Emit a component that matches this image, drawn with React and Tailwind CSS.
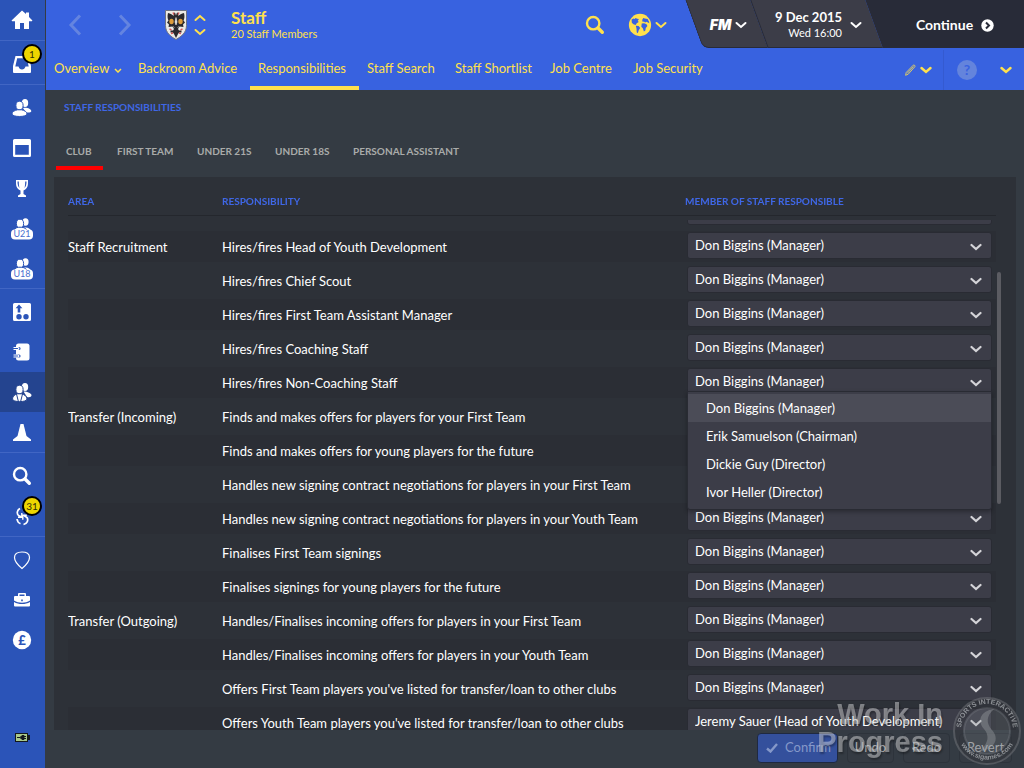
import { useLayoutEffect, useRef } from "react";

const MANAGER = "Don Biggins (Manager)";
const HEAD_OF_YOUTH = "Jeremy Sauer (Head of Youth Development)";
const CANDIDATES = [MANAGER, "Erik Samuelson (Chairman)", "Dickie Guy (Director)", "Ivor Heller (Director)"];

const ROWS = [
  { area: "", text: "", member: MANAGER },
  { area: "Staff Recruitment", text: "Hires/fires Head of Youth Development", member: MANAGER },
  { area: "", text: "Hires/fires Chief Scout", member: MANAGER },
  { area: "", text: "Hires/fires First Team Assistant Manager", member: MANAGER },
  { area: "", text: "Hires/fires Coaching Staff", member: MANAGER },
  { area: "", text: "Hires/fires Non-Coaching Staff", member: MANAGER, open: true },
  { area: "Transfer (Incoming)", text: "Finds and makes offers for players for your First Team", member: MANAGER },
  { area: "", text: "Finds and makes offers for young players for the future", member: MANAGER },
  { area: "", text: "Handles new signing contract negotiations for players in your First Team", member: MANAGER },
  { area: "", text: "Handles new signing contract negotiations for players in your Youth Team", member: MANAGER },
  { area: "", text: "Finalises First Team signings", member: MANAGER },
  { area: "", text: "Finalises signings for young players for the future", member: MANAGER },
  { area: "Transfer (Outgoing)", text: "Handles/Finalises incoming offers for players in your First Team", member: MANAGER },
  { area: "", text: "Handles/Finalises incoming offers for players in your Youth Team", member: MANAGER },
  { area: "", text: "Offers First Team players you've listed for transfer/loan to other clubs", member: MANAGER },
  { area: "", text: "Offers Youth Team players you've listed for transfer/loan to other clubs", member: HEAD_OF_YOUTH },
];

function Chevron({ className = "", width = 2 }) {
  return (
    <svg className={className} width="12" height="8" viewBox="0 0 12 8" fill="none" stroke="currentColor" strokeWidth={width} aria-hidden="true">
      <path d="M1.500 2 6 6l4.500-4" strokeLinecap="round" />
    </svg>
  );
}

function Svg({ children, size = 22, className = "" }) {
  return (
    <svg className={className} width={size} height={size} viewBox="0 0 22 22" fill="currentColor" aria-hidden="true">
      {children}
    </svg>
  );
}

const HomeIcon = () => (
  <Svg>
    <path d="M11 1.500.8 11.300c-.3.4-.1.900.4.900H4V20h5v-6h4v6h5v-7.800h2.800c.5 0 .7-.5.4-.9L18 8V3.500h-3V5z" />
  </Svg>
);

const InboxIcon = () => (
  <Svg>
    <path fillRule="evenodd" d="M4.500 3h13l2.500 10V19a1 1 0 0 1-1 1H3a1 1 0 0 1-1-1v-6zM6.200 5.200 4.300 13.500h3.200c.6 2 1.700 3 3.500 3s2.900-1 3.500-3h3.200l-1.900-8.300z" />
  </Svg>
);

const PeopleIcon = () => (
  <Svg>
    <ellipse cx="14" cy="6" rx="3.200" ry="3.900" />
    <path d="M12 11c4-1 8 1 8.300 3 .1 1.500-2.300 1.700-5.300 1.500z" />
    <g stroke="#2b54b8" strokeWidth="1">
      <ellipse cx="8.500" cy="8.500" rx="3.600" ry="4.300" />
      <path d="M1 17c0-2.500 2.800-3.500 5.500-4.200h4c2.700.7 5.500 1.700 5.500 4.200 0 3.300-15 3.300-15 0z" />
    </g>
  </Svg>
);

const CalendarIcon = () => (
  <Svg>
    <path fillRule="evenodd" d="M3.500 2h15A1.500 1.500 0 0 1 20 3.500v15a1.500 1.500 0 0 1-1.500 1.500h-15A1.500 1.500 0 0 1 2 18.500v-15A1.500 1.500 0 0 1 3.500 2zm.7 6v9.800h13.600V8z" />
  </Svg>
);

const TrophyIcon = () => (
  <Svg>
    <path fillRule="evenodd" d="M5 3h12v3c0 4.500-2 6.500-4.500 7.500v3.500L15 18.500V20H7v-1.500L9.500 17v-3.500C7 12.500 5 10.500 5 6zm1.500 1.500c0 3 .5 5 2 6.500-.5-2-.7-4-.7-6.500zm9 0h-1.300c0 2.500-.2 4.500-.7 6.500 1.500-1.500 2-3.500 2-6.500z" />
  </Svg>
);

function SquadIcon({ label }) {
  return (
    <svg width="24" height="24" viewBox="0 0 24 24" fill="currentColor" aria-hidden="true">
      <ellipse cx="15.500" cy="6" rx="3.100" ry="3.700" />
      <path d="M11 13c5-3 9-1 10 2H11z" />
      <g stroke="#2b54b8" strokeWidth="1">
        <ellipse cx="10" cy="7.500" rx="3.600" ry="4.300" />
        <path d="M4 14.500c1-3 4-3.300 6-3.300s6 .3 7 3.300z" />
      </g>
      <rect x="1" y="13.500" width="22" height="10" rx="4" />
      <text x="12" y="20.500" textAnchor="middle" fontSize="9" fill="#4a6fd0">{label}</text>
    </svg>
  );
}

const TacticsIcon = () => (
  <Svg>
    <path fillRule="evenodd" d="M3.500 2h15A1.500 1.500 0 0 1 20 3.500v15a1.500 1.500 0 0 1-1.500 1.500h-15A1.500 1.500 0 0 1 2 18.500v-15A1.500 1.500 0 0 1 3.500 2zM8 3.500 4.600 7.300h2.100V11.500h2.600V7.300h2.100zM8 13a2.700 2.700 0 1 0 0 5.400A2.700 2.700 0 0 0 8 13zm7 0a2.700 2.700 0 1 0 0 5.400A2.700 2.700 0 0 0 15 13z" />
  </Svg>
);

const NotebookIcon = () => (
  <Svg>
    <rect x="5" y="2.500" width="13.500" height="17" rx="2.500" />
    <path d="M4 7.500h4M4 15h4" fill="none" stroke="#2b54b8" strokeWidth="3.200" strokeLinecap="round" />
    <path d="M2.500 8.500h4.300a1 1 0 0 0 0-2H2.500M2.500 16h4.300a1 1 0 0 0 0-2H2.500" fill="none" stroke="currentColor" strokeWidth="1.200" />
  </Svg>
);

const StaffIcon = () => (
  <Svg>
    <ellipse cx="14" cy="6" rx="3.200" ry="3.900" />
    <path d="M12.500 10.500c4 0 8 2 8 3.800 0 1.700-2 2.200-4.500 1.700z" />
    <g stroke="#24448f" strokeWidth="1">
      <ellipse cx="8.500" cy="8.500" rx="3.600" ry="4.300" />
      <path d="M1.500 18c0-3 2.500-4.500 5-5.200h4c2.500.7 5.500 2.200 5.500 5.200 0 3.500-14.500 3.500-14.500 0z" />
      <path fill="none" d="m5.500 13 2 8M11.500 13l-2 8" />
    </g>
  </Svg>
);

const ConeIcon = () => (
  <Svg>
    <path d="M9.500 3h3l3 12 4.500 3.500V20H2v-1.500L6.500 15z" />
  </Svg>
);

const SearchIcon = () => (
  <Svg>
    <circle cx="9.200" cy="9.200" r="6.200" fill="none" stroke="currentColor" strokeWidth="2.400" />
    <path d="m14 14 4.300 4.300" fill="none" stroke="currentColor" strokeWidth="3.400" strokeLinecap="round" />
  </Svg>
);

const RefreshIcon = () => (
  <Svg>
    <g fill="none" stroke="currentColor" strokeWidth="1.700">
      <path d="M9 3.500C6 5 5.500 8.500 7.500 10.500l3 1.500M12.500 19.500c4-1 5-4.500 3.500-7l-3-2M6 14c.3 2.200 1.500 4 3.500 4.800M13.500 4c1 .7 1.700 1.500 2 2.700" />
      <path d="M10.800 8v4.300H7M11.800 14.800v-4.600h4" strokeWidth="1.400" />
    </g>
  </Svg>
);

const PinIcon = () => (
  <Svg>
    <path d="M11 19.500C8 17 3.500 12.500 3.500 8.500 3.500 4.500 6.500 3 11 3s7.500 1.500 7.500 5.500c0 4-4.500 8.500-7.500 11z" fill="none" stroke="currentColor" strokeWidth="1.200" />
  </Svg>
);

const BriefcaseIcon = () => (
  <Svg>
    <path fillRule="evenodd" d="M7 7V5.200C7 4.500 7.500 4 8.200 4h5.600c.7 0 1.200.5 1.200 1.200V7h3a1 1 0 0 1 1 1v3.500c-2.500 1.500-5 2.200-8 2.200s-5.500-.7-8-2.200V8a1 1 0 0 1 1-1zm1.500 0h5V5.500h-5zM10.200 10.500v1.800h1.600v-1.800zM3 13c2.500 1.400 5 2 8 2s5.500-.6 8-2v3.500a1 1 0 0 1-1 1H4a1 1 0 0 1-1-1z" />
  </Svg>
);

const PoundIcon = () => (
  <Svg>
    <circle cx="11" cy="11" r="9.200" />
    <text x="11" y="15.500" textAnchor="middle" fontSize="13" fontWeight="900" fill="#2b54b8">£</text>
  </Svg>
);

const BatteryIcon = () => (
  <svg width="15" height="9" viewBox="0 0 15 9" aria-hidden="true">
    <rect x="12" y="2" width="3" height="5" fill="#14181c" />
    <rect x=".5" y=".5" width="12" height="8" fill="#a9c98a" stroke="#14181c" />
    <path d="M2 4.500h3M5 4.500 7 2.500h2v4H7zM9 3.500h2M9 5.500h2" fill="#14181c" stroke="#14181c" strokeWidth="1" />
  </svg>
);

const GlobeIcon = () => (
  <Svg size={24}>
    <circle cx="11" cy="11" r="10.200" />
    <g fill="#3862e0">
      <path d="M3.300 6 5 5l1 .6L7 4.500l1.500.7L10 5.500 9 7l.8 1.200L8 9.500 7 11 5 10.200 3.500 9z" />
      <path d="m7.200 11.800 2.500.2 1.500 1.700-1.300 1.800L9 18.500l-1-.8-.2-3.200z" />
      <path d="m13 6.500 1-2 1.500.6 2.500.4L19.300 8l.2 1.300-1.200-.6-1.500-.7-1 .7-1.300-1-1 .5z" />
      <path d="m12.600 9.700 2.200-.3 2.200 1 .8 1.500-1.500 1.800-.4 2.300-1.300 1-1-3-1.400-1.500z" />
    </g>
  </Svg>
);

function ClubCrest() {
  return (
    <svg width="24" height="32" viewBox="0 0 24 32" aria-hidden="true">
      <path d="M1.500 1.500h21v15c0 7-5 11-10.500 14C6.500 27.500 1.500 23.500 1.500 16.500z" fill="#eceae6" stroke="#6c7286" />
      <path d="M4 4c2.500.5 4.500 1.500 5.500 3L10 3.500l1.200.5.8 2.500.8-2.500 1.200-.5.500 3.500c1-1.500 3-2.500 5.500-3 .8 3 .5 5.500-.5 7.500l1.500 2-2 2 .5 2.500-4-.5-1.500 2.500 1 1.500h2.500v2h-2.500l-1 1.500-2 4-2-4-1-1.500H6.500v-2H9L10 20l-1.500-2.500-4 .5.5-2.500-2-2 1.500-2C3.500 9.500 3.200 7 4 4z" fill="#2a282d" />
      <path d="M12 8.500 11 13l1 3 1-3zM9 17.500l1.500 1M15 17.500l-1.500 1" fill="#eceae6" stroke="#eceae6" strokeWidth=".6" />
      <ellipse cx="7.500" cy="12.500" rx="2.200" ry="2.700" fill="#dd9b3a" />
      <ellipse cx="16.500" cy="12.500" rx="2.200" ry="2.700" fill="#dd9b3a" />
      <path d="M9 3.500l1 2M15 3.500l-1 2M5.500 20l2 .8M18.500 20l-2 .8M7 24.500l2-.5M17 24.500l-2-.5" stroke="#d65353" strokeWidth="1.400" />
    </svg>
  );
}

const SIDEBAR = [
  [{ name: "Home", icon: <HomeIcon /> }],
  [{ name: "Inbox", icon: <InboxIcon />, badge: "1" }],
  [
    { name: "Squad", icon: <PeopleIcon /> },
    { name: "Calendar", icon: <CalendarIcon /> },
    { name: "Competitions", icon: <TrophyIcon /> },
    { name: "Under 21s", icon: <SquadIcon label="U21" /> },
    { name: "Under 18s", icon: <SquadIcon label="U18" /> },
  ],
  [
    { name: "Tactics", icon: <TacticsIcon /> },
    { name: "Team report", icon: <NotebookIcon /> },
    { name: "Staff", icon: <StaffIcon />, active: true },
    { name: "Training", icon: <ConeIcon /> },
  ],
  [
    { name: "Scouting", icon: <SearchIcon /> },
    { name: "Transfers", icon: <RefreshIcon />, badge: "31" },
  ],
  [
    { name: "Club", icon: <PinIcon /> },
    { name: "Board", icon: <BriefcaseIcon /> },
    { name: "Finances", icon: <PoundIcon /> },
  ],
];

function Sidebar() {
  return (
    <nav aria-label="Main" className="flex w-[45px] shrink-0 flex-col bg-[#2b54b8] text-white">
      {SIDEBAR.map((group, i) => (
        <ul key={i} className="border-b border-[#4166c4] pt-[3px] first:pt-0 last-of-type:border-b-0">
          {group.map((item) => (
            <li key={item.name}>
              <a
                href="#"
                aria-label={item.name}
                className={`relative flex h-10 items-center justify-center pr-[2px] ${item.active ? "bg-[#24448f]" : ""}`}
              >
                {item.icon}
                {item.badge && (
                  <span className="absolute top-0 right-[3px] flex size-5 items-center justify-center rounded-full border-2 border-black bg-[#edd500] pb-px text-[10px] leading-none text-[#33300a]">
                    {item.badge}
                  </span>
                )}
              </a>
            </li>
          ))}
        </ul>
      ))}
      <div className="mt-auto flex justify-center pb-[26px]">
        <BatteryIcon />
      </div>
    </nav>
  );
}

function StatusBar() {
  return (
    <div className="flex h-12 shrink-0 text-white">
      <button type="button" className="relative flex w-[65px] items-center justify-center gap-1 pt-[2px] pl-1">
        <span className="absolute inset-0 skew-x-[20deg] rounded-bl-md border-b border-l border-[#282b38] bg-[#3c3d48]" />
        <span className="relative font-['Inter','Lato',sans-serif] text-sm font-black italic">FM</span>
        <Chevron className="relative" />
      </button>
      <button type="button" className="relative flex w-[115px] items-center justify-end gap-2 pt-[2px] pr-3">
        <span className="absolute inset-0 skew-x-[20deg] border-b border-l border-[#282b38] bg-[#3c3d48]" />
        <span className="relative flex flex-col text-right">
          <span className="text-[13px] leading-4 font-bold whitespace-nowrap">9 Dec 2015</span>
          <span className="text-[11px] leading-4">Wed 16:00</span>
        </span>
        <Chevron className="relative" />
      </button>
      <button type="button" className="relative flex w-[150px] items-center justify-center gap-2 pt-[2px] pl-3">
        <span className="absolute inset-y-0 left-0 -right-6 skew-x-[20deg] bg-[#282b38]" />
        <span className="relative text-sm font-bold">Continue</span>
        <svg className="relative" width="13" height="13" viewBox="0 0 13 13" aria-hidden="true">
          <circle cx="6.500" cy="6.500" r="6.200" fill="#fff" />
          <path d="m5 3.500 3 3-3 3" fill="none" stroke="#282b38" strokeWidth="2" />
        </svg>
      </button>
    </div>
  );
}

const TABS = [
  { label: "Overview", width: "w-[84px]", menu: true },
  { label: "Backroom Advice", width: "w-[120px]" },
  { label: "Responsibilities", width: "w-[109px]", active: true },
  { label: "Staff Search", width: "w-[88px]" },
  { label: "Staff Shortlist", width: "w-[95px]" },
  { label: "Job Centre", width: "w-[83px]" },
  { label: "Job Security", width: "w-[92px]" },
];

function Header() {
  return (
    <header className="overflow-hidden bg-[#3862e0] text-[#ffe04d]">
      <div className="flex">
        <div className="flex flex-1 items-center pt-[2px]">
          <button type="button" aria-label="Back" className="ml-[22px] text-[#6484e0]">
            <svg width="14" height="22" viewBox="0 0 14 22" fill="none" stroke="currentColor" strokeWidth="3"><path d="M12 1.500 3 11l9 9.500" /></svg>
          </button>
          <button type="button" aria-label="Forward" className="ml-9 text-[#6484e0]">
            <svg width="14" height="22" viewBox="0 0 14 22" fill="none" stroke="currentColor" strokeWidth="3"><path d="m2 1.500 9 9.500-9 9.500" /></svg>
          </button>
          <div className="ml-8"><ClubCrest /></div>
          <div className="ml-[6px] flex flex-col gap-[6px]">
            <button type="button" aria-label="Previous"><Chevron className="rotate-180" /></button>
            <button type="button" aria-label="Next"><Chevron /></button>
          </div>
          <div className="ml-[25px] flex flex-col">
            <h1 className="text-[17px] leading-[18px] font-bold">Staff</h1>
            <p className="text-[11px] leading-[14px]">20 Staff Members</p>
          </div>
          <button type="button" aria-label="Search" className="mr-[22px] ml-auto"><SearchIcon /></button>
          <button type="button" aria-label="World" className="mr-[27px] flex items-center gap-[3px]">
            <GlobeIcon />
            <Chevron />
          </button>
        </div>
        <StatusBar />
      </div>
      <div className="flex h-[42px] items-stretch">
        <nav aria-label="Staff" className="flex text-[13px]">
          {TABS.map((tab) => (
            <a
              key={tab.label}
              href="#"
              aria-current={tab.active ? "page" : undefined}
              className={`flex shrink-0 items-center gap-[5px] border-b-4 pt-1 pl-2 whitespace-nowrap ${tab.width} ${tab.active ? "border-[#ffe04d]" : "border-transparent"}`}
            >
              {tab.label}
              {tab.menu && <svg className="mt-[2px]" width="8" height="5" viewBox="0 0 8 5" fill="none" stroke="currentColor" strokeWidth="1.500" aria-hidden="true"><path d="m1 1 3 3 3-3" /></svg>}
            </a>
          ))}
        </nav>
        <div className="ml-auto flex pt-[2px]">
          <button type="button" aria-label="Edit" className="flex items-center gap-1 pr-[11px]">
            <svg width="11" height="12" viewBox="0 0 11 12" fill="none" stroke="currentColor" strokeWidth=".8" aria-hidden="true">
              <path d="M.6 11.300l.6-2.800L8.200 1.200c.8-.8 2.400.6 1.700 1.500L3.200 10.200zM2.200 9.300l6.300-6.800" />
            </svg>
            <Chevron width={2.400} />
          </button>
          <button type="button" aria-label="Help" className="flex items-center border-l border-[#345ad0] px-[13px]">
            <span className="flex size-5 items-center justify-center rounded-full bg-[#6484dc] text-sm font-bold text-[#3862e0]">?</span>
          </button>
          <button type="button" aria-label="More" className="flex items-center pr-3 pl-[10px]"><Chevron width={2.400} /></button>
        </div>
      </div>
    </header>
  );
}

function StaffSelect({ row }) {
  return (
    <div className="relative">
      <select
        aria-label={`Member of staff responsible: ${row.text}`}
        defaultValue={row.member}
        className="block h-[27px] w-full appearance-none rounded-[3px] border border-[#292b33] bg-[#3c3d48] px-[7px] text-[13px] text-white"
      >
        {CANDIDATES.map((name) => <option key={name}>{name}</option>)}
        <option>{HEAD_OF_YOUTH}</option>
      </select>
      <Chevron className="pointer-events-none absolute top-[11px] right-[10px] text-[#d4d4d8]" width={2.2} />
      {row.open && (
        <ul role="listbox" aria-label="Available staff" className="absolute inset-x-0 top-[23px] z-10 rounded-b-[3px] border border-[#292b33] bg-[#3c3d48] pt-[2px] pb-[3px] shadow-[0_2px_4px_rgba(0,0,0,0.3)]">
          {CANDIDATES.map((name) => (
            <li
              key={name}
              role="option"
              aria-selected={name === row.member}
              className={`flex h-7 items-center pt-[2px] pl-[18px] ${name === row.member ? "bg-[#4b4c57]" : ""}`}
            >
              {name}
            </li>
          ))}
        </ul>
      )}
    </div>
  );
}

function ColumnHeading({ children }) {
  return (
    <div className="pb-1">
      <div className="h-[39px] border-b border-[#24272d] pt-[10px] leading-7">{children}</div>
    </div>
  );
}

function ResponsibilityTable() {
  const scroller = useRef(null);
  useLayoutEffect(() => {
    scroller.current.scrollTop = 23;
  }, []);
  return (
    <section className="mx-2 flex min-h-0 flex-1 bg-[#2d3138] pr-[15px] pl-[14px]">
      <div ref={scroller} className="min-w-0 flex-1 overflow-y-auto [scrollbar-width:none]">
        <table className="w-full table-fixed border-separate border-spacing-0 text-left text-[13px] text-white">
          <thead className="sticky top-0 z-20 bg-[#2d3138] text-[10px] text-[#3f67e6] uppercase">
            <tr>
              <th className="w-[154px] p-0"><ColumnHeading>Area</ColumnHeading></th>
              <th className="p-0"><ColumnHeading>Responsibility</ColumnHeading></th>
              <th className="w-[311px] p-0"><ColumnHeading>Member of staff responsible</ColumnHeading></th>
            </tr>
          </thead>
          <tbody>
            {ROWS.map((row, i) => (
              <tr key={i} className={i % 2 ? "bg-linear-to-b from-[#2b2e35] from-90% to-[#2d3138] to-90%" : ""}>
                <td className="h-[34px] p-0">{row.area}</td>
                <td className="h-[34px] p-0">{row.text}</td>
                <td className="h-[34px] pt-px pr-1 pb-[5px] pl-[2px] align-top"><StaffSelect row={row} /></td>
              </tr>
            ))}
          </tbody>
        </table>
      </div>
      <div className="mt-[95px] ml-px h-[232px] w-1 rounded-full bg-[#5b5c62]" />
    </section>
  );
}

function WorkInProgressMark() {
  return (
    <div className="pointer-events-none absolute right-0 bottom-0 z-30 flex items-end gap-[9px] pr-[2px] pb-[2px]">
      <p className="pb-[10px] text-right font-['Liberation_Sans',sans-serif] text-[29px] leading-7 font-bold text-white/40 [text-shadow:1px_2px_2px_rgba(0,0,0,0.3)]">
        Work In
        <br />
        Progress
      </p>
      <svg width="70" height="70" viewBox="0 0 70 70" aria-hidden="true" fontFamily="Liberation Sans, sans-serif" fontWeight="bold">
        <defs>
          <path id="ring-top" d="M10 41a26 26 0 1 1 50 0" />
          <path id="ring-bottom" d="M6.500 43a30 30 0 0 0 57 0" />
        </defs>
        <circle cx="35" cy="35" r="28.500" fill="none" stroke="#33363c" strokeOpacity=".5" strokeWidth="9" />
        <circle cx="35" cy="35" r="33" fill="none" stroke="#85888d" strokeOpacity=".4" strokeWidth="2" />
        <circle cx="35" cy="35" r="23" fill="#85888d" fillOpacity=".22" stroke="#85888d" strokeOpacity=".3" strokeWidth="2" />
        <path d="M42 13c-14 2-17 12-10 20 5 6 6 14-6 23 17-3 22-13 14-22-6-7-6-14 2-21z" fill="#a8abb0" fillOpacity=".35" />
        <g fill="#b4b6ba" fillOpacity=".7">
          <text fontSize="7"><textPath href="#ring-top" startOffset="50%" textAnchor="middle">SPORTS INTERACTIVE</textPath></text>
          <text fontSize="7"><textPath href="#ring-bottom" startOffset="50%" textAnchor="middle">www.sigames.com</textPath></text>
        </g>
      </svg>
    </div>
  );
}

const SUB_TABS = [
  { label: "Club", width: "w-[47px]", active: true },
  { label: "First Team", width: "w-[56px]" },
  { label: "Under 21s", width: "w-[54px]" },
  { label: "Under 18s", width: "w-[54px]" },
  { label: "Personal Assistant", width: "w-[110px]" },
];

export default function App() {
  return (
    <div className="relative flex h-screen overflow-hidden bg-[#343b43] font-[Lato,'Noto_Sans',sans-serif] text-white">
      <Sidebar />
      <div className="ml-px flex min-w-0 flex-1 flex-col">
        <Header />
        <h2 className="pt-[9px] pl-[18px] text-[10px] leading-4 font-bold text-[#3f67e6] uppercase">Staff Responsibilities</h2>
        <div role="tablist" className="mt-[21px] mb-[7px] ml-[10px] flex gap-6 text-[10px] font-bold text-[#a9abaa]">
          {SUB_TABS.map((tab) => (
            <button
              key={tab.label}
              type="button"
              role="tab"
              aria-selected={Boolean(tab.active)}
              className={`h-[34px] border-b-4 text-left whitespace-nowrap uppercase ${tab.width} ${tab.active ? "-mr-[10px] border-[#ff0000] pl-[10px]" : "border-transparent"}`}
            >
              {tab.label}
            </button>
          ))}
        </div>
        <ResponsibilityTable />
        <footer className="flex h-[38px] shrink-0 items-start justify-end gap-[9px] pt-[3px] pr-3 text-[13px] text-[#a9acb0]">
          <button type="button" className="flex h-[30px] w-[81px] items-center gap-[7px] rounded-[4px] border border-[#1f2940] bg-[#34509c] pl-2 text-[#8598c9]">
            <svg width="12" height="10" viewBox="0 0 12 10" fill="none" stroke="currentColor" strokeWidth="2.400" aria-hidden="true"><path d="m1 5.500 3.500 3L11 1" /></svg>
            Confirm
          </button>
          <button type="button" className="h-[30px] w-[47px] rounded-[4px] border border-[#2d333b] bg-[#353b43]">Undo</button>
          <button type="button" className="h-[30px] w-[47px] rounded-[4px] border border-[#2d333b] bg-[#353b43]">Redo</button>
          <button type="button" className="h-[30px] w-[53px] rounded-[4px] border border-[#2d333b] bg-[#353b43]">Revert</button>
        </footer>
      </div>
      <WorkInProgressMark />
    </div>
  );
}
